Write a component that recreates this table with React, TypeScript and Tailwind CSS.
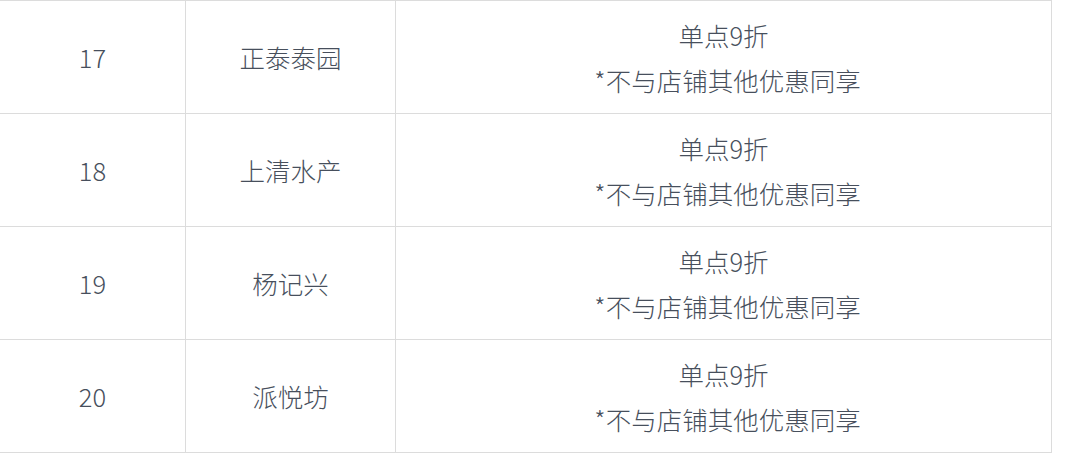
const rows = [
  { no: "17", name: "正泰泰园" },
  { no: "18", name: "上清水产" },
  { no: "19", name: "杨记兴" },
  { no: "20", name: "派悦坊" },
]

export default function App() {
  return (
    <div
      className="bg-white w-[1065px] h-[464px] text-[#474f5c] text-[25.5px] font-light"
      style={{ fontFamily: '"Noto Sans CJK SC", "Noto Sans", sans-serif' }}
    >
      <div className="w-[1052px] border-t border-[#dcdcdc]">
        {rows.map((row) => (
          <div key={row.no} className="grid grid-cols-[186px_210px_656px] h-[113px] border-b border-[#dcdcdc]">
            <div className="flex items-center justify-center border-r border-[#dcdcdc]">{row.no}</div>
            <div className="flex items-center justify-center border-r border-[#dcdcdc]">{row.name}</div>
            <div className="flex flex-col items-center justify-center border-r border-[#dcdcdc] leading-[45px]">
              <span>单点9折</span>
              <span className="pl-[8px]">*不与店铺其他优惠同享</span>
            </div>
          </div>
        ))}
      </div>
    </div>
  )
}
